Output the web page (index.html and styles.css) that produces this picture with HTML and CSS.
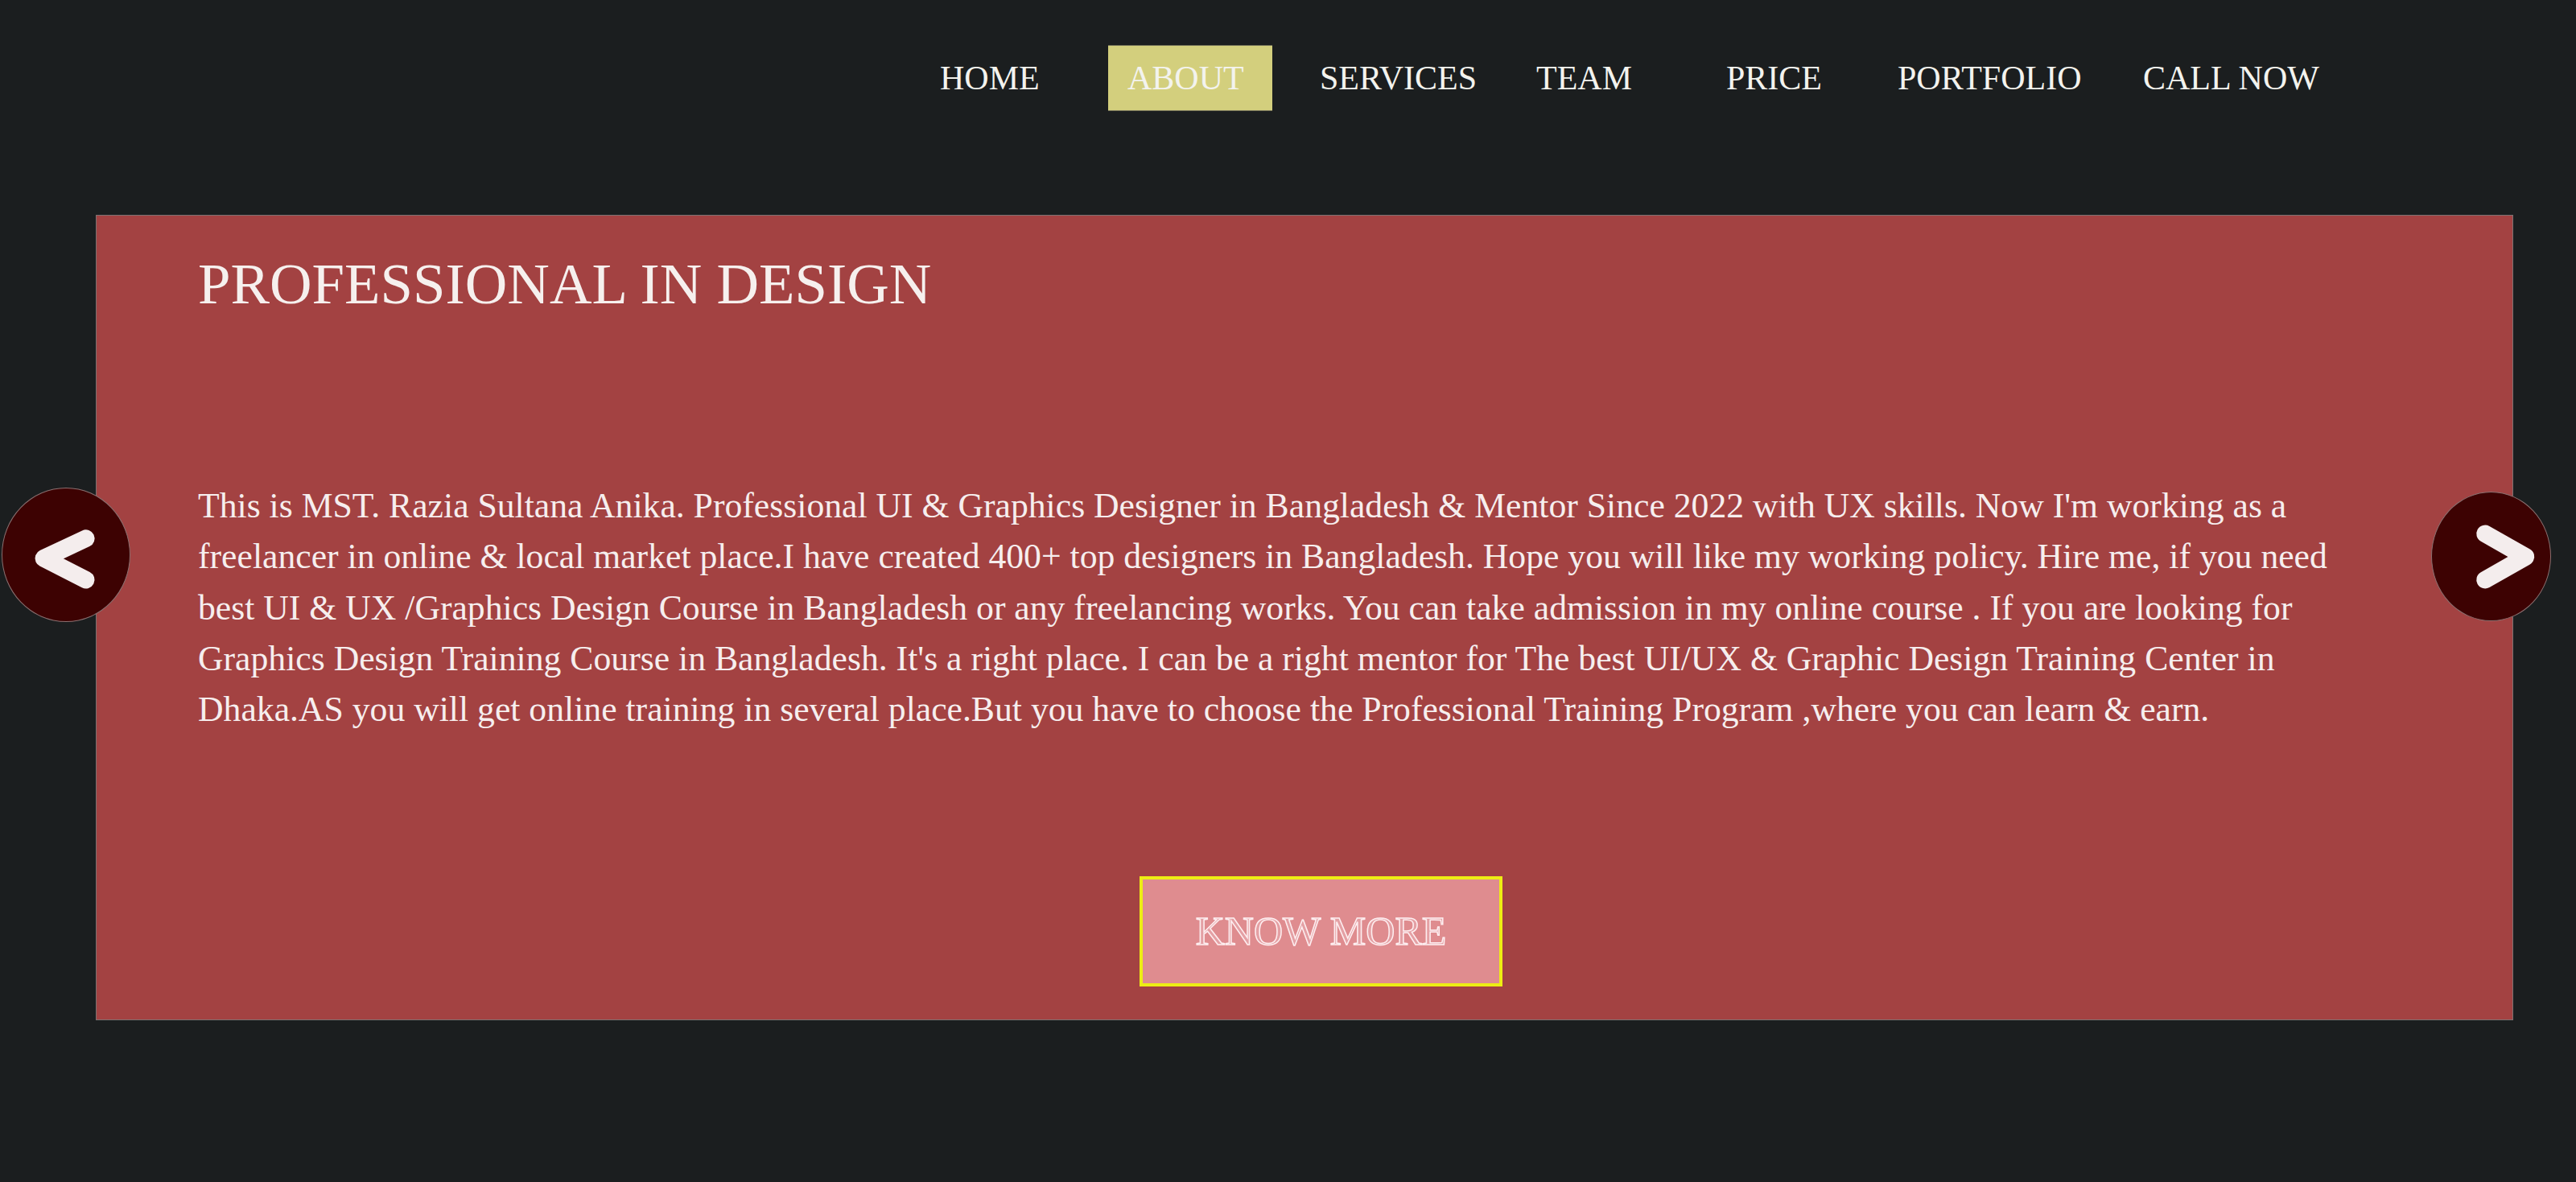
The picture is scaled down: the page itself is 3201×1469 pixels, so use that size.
FILE: index.html
```html
<!DOCTYPE html>
<html lang="en">
<head>
<meta charset="utf-8">
<title>Professional in Design</title>
<link rel="stylesheet" href="styles.css">
</head>
<body>
<header class="header">
  <nav>
    <ul class="nav">
      <li class="nav-item w-home"><a href="#">HOME</a></li>
      <li class="nav-item w-about"><a href="#" class="active">ABOUT</a></li>
      <li class="nav-item w-services"><a href="#">SERVICES</a></li>
      <li class="nav-item w-team"><a href="#">TEAM</a></li>
      <li class="nav-item w-price"><a href="#">PRICE</a></li>
      <li class="nav-item w-portfolio"><a href="#">PORTFOLIO</a></li>
      <li class="nav-item"><a href="#">CALL NOW</a></li>
    </ul>
  </nav>
</header>

<section class="slider">
  <div class="panel">
    <h1 class="title">PROFESSIONAL IN DESIGN</h1>
    <p class="text">This is MST. Razia Sultana Anika. Professional UI &amp; Graphics Designer in Bangladesh &amp; Mentor Since 2022 with UX skills. Now I'm working as a freelancer in online &amp; local market place.I have created 400+ top designers in Bangladesh. Hope you will like my working policy. Hire me, if you need best UI &amp; UX /Graphics Design Course in Bangladesh or any freelancing works. You can take admission in my online course . If you are looking for Graphics Design Training Course in Bangladesh. It's a right place. I can be a right mentor for The best UI/UX &amp; Graphic Design Training Center in Dhaka.AS you will get online training in several place.But you have to choose the Professional Training Program ,where you can learn &amp; earn.</p>
    <a href="#" class="btn">KNOW MORE</a>
  </div>

  <a href="#" class="arrow arrow-left" aria-label="Previous">
    <svg viewBox="0 0 160 167" width="160" height="167">
      <polyline points="105,63 52,88 105,115" fill="none" stroke="#f4eded" stroke-width="22" stroke-linecap="round" stroke-linejoin="round"/>
    </svg>
  </a>
  <a href="#" class="arrow arrow-right" aria-label="Next">
    <svg viewBox="0 0 149 161" width="149" height="161">
      <polyline points="67,52 118,81 67,110" fill="none" stroke="#f4eded" stroke-width="22" stroke-linecap="round" stroke-linejoin="round"/>
    </svg>
  </a>
</section>
</body>
</html>
```

FILE: styles.css
```css
* {
  box-sizing: border-box;
}

html, body {
  margin: 0;
  padding: 0;
}

body {
  background: #1b1e1f;
  color: #f4eeee;
  font-family: "Liberation Serif", "Times New Roman", serif;
  min-height: 1469px;
}

/* ---------- header / nav ---------- */
.header {
  padding-top: 56px;
}

.nav {
  list-style: none;
  margin: 0 0 0 1144px;
  padding: 0;
  display: flex;
  align-items: flex-start;
}

.nav-item {
  flex: none;
}

.w-home { width: 233px; }
.w-about { width: 239px; }
.w-services { width: 269px; }
.w-team { width: 236px; }
.w-price { width: 213px; }
.w-portfolio { width: 305px; }

.nav a {
  display: inline-block;
  height: 82px;
  line-height: 82px;
  padding: 0 24px;
  font-size: 42px;
  color: #f3f3ee;
  text-decoration: none;
  white-space: nowrap;
}

.nav a.active {
  background: #d3cf7d;
  padding-right: 35px;
  border-top: 1px solid #77745a;
  border-bottom: 1px solid #77745a;
  line-height: 80px;
}

/* ---------- slider ---------- */
.slider {
  position: relative;
  margin-top: 129px;
}

.panel {
  margin-left: 119px;
  width: 3004px;
  height: 1001px;
  background: #a34242;
  border: 1px solid #7d7272;
  padding: 48px 0 0 126px;
}

.title {
  margin: 0;
  font-size: 72.8px;
  line-height: 74px;
  font-weight: normal;
  color: #f6f0ee;
}

.text {
  margin: 207px 0 0 0;
  width: 2690px;
  font-size: 43.7px;
  line-height: 63.3px;
  color: #f6eeee;
}

.btn {
  display: block;
  margin: 176px 0 0 1170px;
  width: 451px;
  height: 137px;
  border: 4px solid #eded14;
  background: #df8c8f;
  text-align: center;
  font-size: 50px;
  line-height: 129px;
  color: #e4a0a4;
  -webkit-text-stroke: 1.5px #fdeef0;
  text-decoration: none;
}

.arrow {
  position: absolute;
  display: block;
  background: #3d0202;
  border: 1px solid #8a7070;
  border-radius: 50%;
}

.arrow svg {
  display: block;
  width: 100%;
  height: 100%;
}

.arrow-left {
  left: 2px;
  top: 339px;
  width: 160px;
  height: 167px;
}

.arrow-right {
  left: 3021px;
  top: 344px;
  width: 149px;
  height: 161px;
}
```
